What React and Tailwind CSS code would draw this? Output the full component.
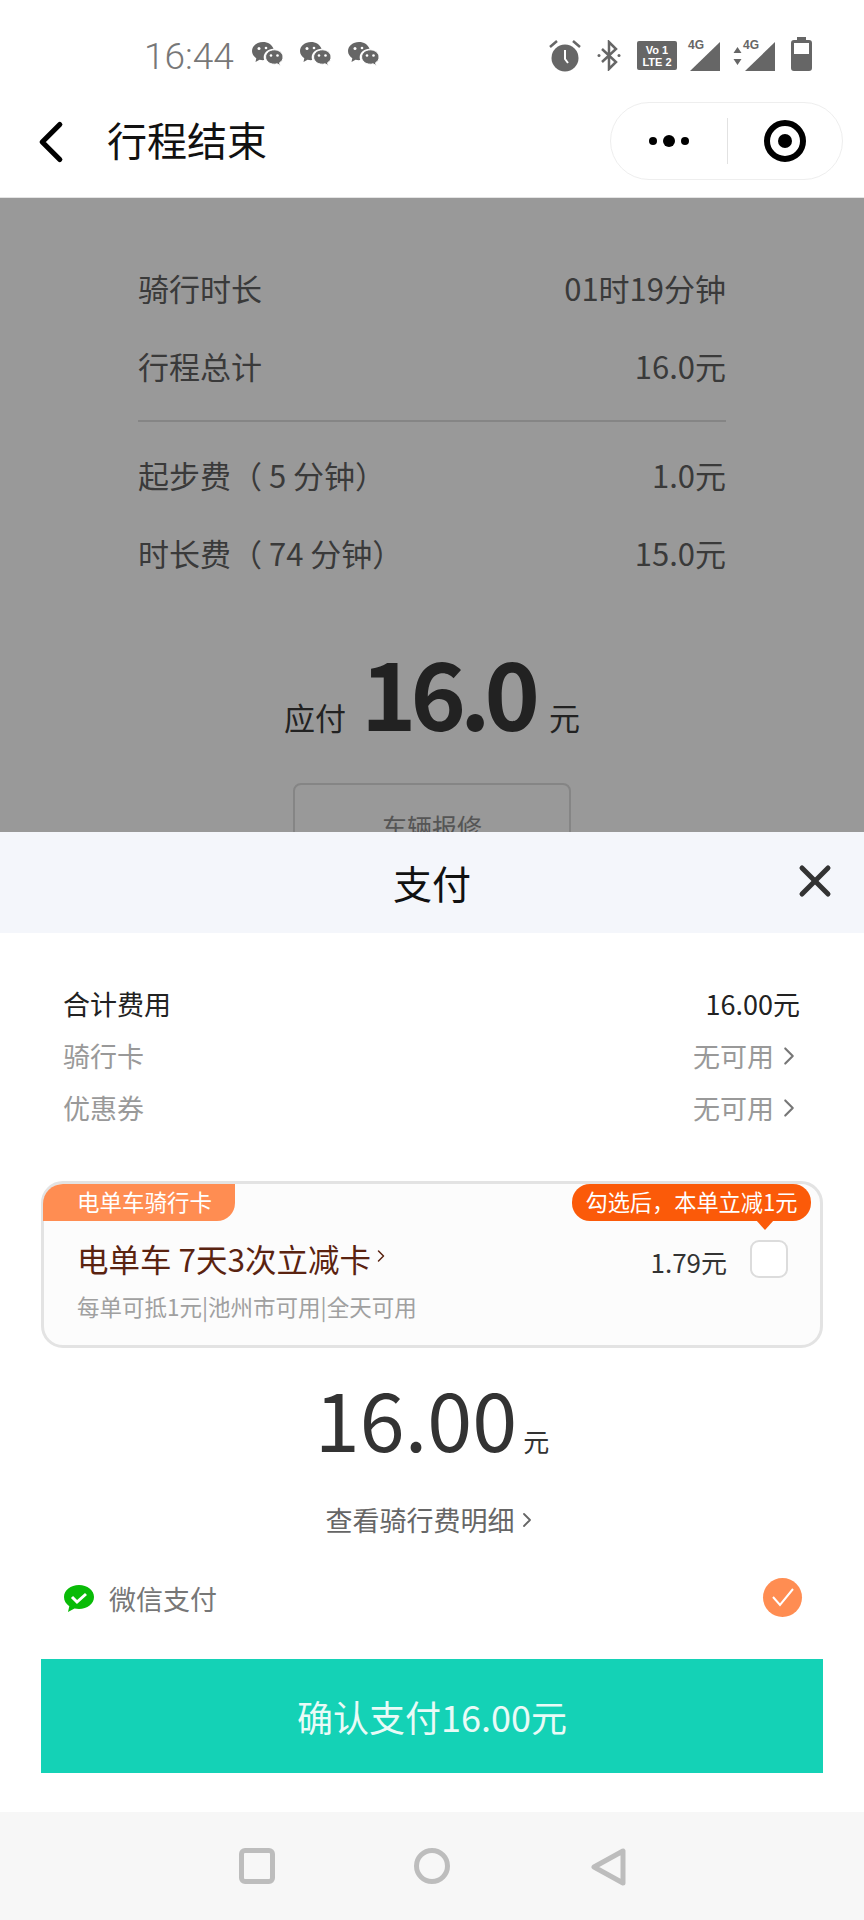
import { ChevronLeft, ChevronRight, X } from 'lucide-react';

const FONT = "font-['Noto_Sans_CJK_SC','Noto_Sans',sans-serif]";

function WeChatGlyph() {
  return (
    <svg width="33" height="30" viewBox="0 0 33 30" fill="#666">
      <path d="M12 1C5.9 1 1 5 1 10c0 3 1.700 5.500 4.300 7.200L4.500 21l4-2.300c1.100.3 2.300.5 3.500.5.400 0 .8 0 1.200-.1-.3-1-.5-1.900-.5-2.900 0-4.800 4.500-8.500 9.800-8.500C21 3.500 16.900 1 12 1z" />
      <path d="M32 16c0-4-3.900-7.200-8.700-7.200S14.600 12 14.600 16s3.900 7.200 8.700 7.200c1 0 1.900-.1 2.800-.4l3.200 1.900-.7-3c2.600-1.400 3.400-3.400 3.400-5.700z" stroke="#fff" strokeWidth="1" />
      <circle cx="8" cy="7.500" r="1.500" fill="#fff" />
      <circle cx="15" cy="7" r="1.300" fill="#fff" />
      <circle cx="20" cy="14.500" r="1.300" fill="#fff" />
      <circle cx="26.500" cy="14.500" r="1.300" fill="#fff" />
    </svg>
  );
}

function SignalIcon() {
  return (
    <div className="relative w-[32px] h-[32px]">
      <svg width="32" height="32" viewBox="0 0 32 32" fill="#666" className="absolute right-0 bottom-0">
        <path d="M32 2v29H2z" />
      </svg>
      <span className="absolute left-[0px] top-[-2px] font-['Liberation_Sans',sans-serif] font-bold text-[12px] leading-[14px] text-[#666]">4G</span>
    </div>
  );
}

function StatusBar() {
  return (
    <div className="h-[95px] flex items-start pt-[33px] pl-[144px] pr-[52px]">
      <span className="font-['Roboto',sans-serif] font-light text-[37px] leading-[47px] text-[#777] w-[107px]">16:44</span>
      <div className="flex gap-[15px] pt-[8px]">
        <WeChatGlyph />
        <WeChatGlyph />
        <WeChatGlyph />
      </div>
      <div className="ml-auto flex items-center h-[47px] -mt-[1px]">
        <svg width="34" height="34" viewBox="0 0 34 34" fill="#666" className="mr-[15px]">
          <circle cx="17" cy="19" r="13.500" />
          <path d="M17 11v9l3 4" stroke="#fff" strokeWidth="2" fill="none" />
          <path d="M2 8l7-6M32 8l-7-6" stroke="#666" strokeWidth="2.500" />
        </svg>
        <svg width="24" height="31" viewBox="0 0 24 31" fill="none" stroke="#666" strokeWidth="2.500" className="mr-[16px]">
          <path d="M5 9l14 13-7 7V2l7 7L5 22" />
          <circle cx="2" cy="15.500" r="1.500" fill="#666" stroke="none" />
          <circle cx="22" cy="15.500" r="1.500" fill="#666" stroke="none" />
        </svg>
        <div className="w-[40px] h-[29px] bg-[#666] rounded-[2px] flex flex-col items-center justify-center mr-[11px] font-['Liberation_Sans',sans-serif] font-bold text-[11px] leading-[12px] text-white">
          <span>Vo 1</span>
          <span>LTE 2</span>
        </div>
        <SignalIcon />
        <svg width="9" height="20" viewBox="0 0 9 20" fill="#666" className="ml-[13px] mr-[1px]">
          <path d="M4.500 1L8.500 7H.5zM4.500 19L.5 13h8z" />
        </svg>
        <SignalIcon />
        <div className="ml-[16px] relative w-[21px] h-[31px] border-[3px] border-[#666] rounded-[3px] flex flex-col justify-end">
          <div className="absolute top-[-6px] left-[3px] w-[9px] h-[3px] bg-[#666]" />
          <div className="h-[14px] bg-[#666]" />
        </div>
      </div>
    </div>
  );
}

function NavBar() {
  return (
    <div className="h-[103px] bg-white flex items-start border-b border-[#e4e4e4]">
      <ChevronLeft size={70} strokeWidth={1.800} className="text-black ml-[16px] mt-[12px] shrink-0" />
      <span className="ml-[21px] mt-[16px] text-[40px] leading-[56px] text-[#111]">行程结束</span>
      <div className="ml-auto mr-[21px] w-[233px] h-[78px] mt-[7px] rounded-full border border-[#eeeeee] flex items-center">
        <div className="w-[116px] flex items-center justify-center gap-[6px]">
          <span className="w-[8px] h-[8px] rounded-full bg-black" />
          <span className="w-[12px] h-[12px] rounded-full bg-black" />
          <span className="w-[8px] h-[8px] rounded-full bg-black" />
        </div>
        <div className="w-px h-[46px] bg-[#e2e2e2]" />
        <div className="flex-1 flex items-center justify-center">
          <div className="w-[42px] h-[42px] rounded-full border-[6px] border-black flex items-center justify-center">
            <span className="w-[14px] h-[14px] rounded-full bg-black" />
          </div>
        </div>
      </div>
    </div>
  );
}

function FeeRow({ label, value }) {
  return (
    <div className="flex justify-between h-[78px] items-center text-[31px] text-[#3a3a3a]">
      <span>{label}</span>
      <span>{value}</span>
    </div>
  );
}

function TripSummary() {
  return (
    <div className="h-[634px] bg-[#999999] overflow-hidden px-[138px] pt-[51px]">
      <FeeRow label="骑行时长" value="01时19分钟" />
      <FeeRow label="行程总计" value="16.0元" />
      <div className="h-[2px] bg-[#858585] mt-[15px] mb-[14px]" />
      <FeeRow label="起步费（ 5 分钟）" value="1.0元" />
      <FeeRow label="时长费（ 74 分钟）" value="15.0元" />
      <div className="flex items-baseline justify-center mt-[40px] text-[#222] h-[116px]">
        <span className="text-[31px] -translate-y-[1px]">应付</span>
        <span className="text-[94px] leading-[116px] font-bold tracking-[-6px] ml-[15px] mr-[15px]">16.0</span>
        <span className="text-[31px] -translate-y-[1px]">元</span>
      </div>
      <div className="mt-[35px] ml-[155px] w-[278px] h-[80px] rounded-[8px] border-2 border-[#858585] flex justify-center pt-[23px] text-[25px] text-[#555]">
        车辆报修
      </div>
    </div>
  );
}

function PayRow({ label, value, dark }) {
  return (
    <div className={`flex items-center justify-between h-[52px] text-[27px] ${dark ? 'text-[#222]' : 'text-[#999]'}`}>
      <span>{label}</span>
      <span className="flex items-center">
        {value}
        {!dark && <ChevronRight size={30} strokeWidth={1.700} className="text-[#777] -mr-[4px]" />}
      </span>
    </div>
  );
}

function RideCard() {
  return (
    <div className="relative mx-[41px] mt-[47px] h-[167px] rounded-[22px] border-[3px] border-[#e3e3e3] bg-[#fcfcfc]">
      <div className="absolute left-[-1px] top-0 w-[192px] h-[37px] bg-[#ff8d52] rounded-tl-[20px] rounded-br-[18px] text-white text-[22.500px] leading-[35px] pl-[34px]">
        电单车骑行卡
      </div>
      <div className="absolute right-[9px] top-0 w-[239px] h-[37px] bg-[#fb5a09] rounded-[18px] text-white text-[22.200px] leading-[35px] text-center whitespace-nowrap">
        勾选后，本单立减1元
        <div className="absolute right-[37px] top-[36px] w-0 h-0 border-l-[9px] border-r-[9px] border-t-[10px] border-l-transparent border-r-transparent border-t-[#fb5a09]" />
      </div>
      <div className="absolute left-[33px] top-[50px] flex items-center text-[31.500px] leading-[48px] text-[#5a2310]">
        电单车 7天3次立减卡
        <ChevronRight size={20} strokeWidth={1.800} className="text-[#5a2310] -mt-[4px]" />
      </div>
      <div className="absolute left-[33px] top-[105px] text-[22.500px] leading-[34px] text-[#a0a0a0]">每单可抵1元|池州市可用|全天可用</div>
      <div className="absolute right-[93px] top-[60px] text-[26px] leading-[36px] text-[#333]">1.79元</div>
      <div className="absolute right-[32px] top-[56px] w-[38px] h-[38px] rounded-[9px] border-2 border-[#dcdcdc] bg-white" />
    </div>
  );
}

function PaymentSheet() {
  return (
    <div className="flex-1 bg-white">
      <div className="relative h-[101px] bg-[#f4f6fb] flex items-center justify-center text-[39px] text-[#111]">
        支付
        <X size={52} strokeWidth={2.300} className="absolute right-[23px] top-[23px] text-[#333]" />
      </div>
      <div className="pl-[63px] pr-[64px] pt-[45px]">
        <PayRow label="合计费用" value="16.00元" dark />
        <PayRow label="骑行卡" value="无可用" />
        <PayRow label="优惠券" value="无可用" />
      </div>
      <RideCard />
      <div className="flex items-baseline justify-center h-[116px] mt-[11px] text-[#333]">
        <span className="text-[81px] leading-[116px]">16.00</span>
        <span className="text-[26px] ml-[6px]">元</span>
      </div>
      <div className="flex items-center justify-center h-[40px] mt-[25px] text-[27px] text-[#666]">
        查看骑行费明细
        <ChevronRight size={24} strokeWidth={1.800} className="text-[#666]" />
      </div>
      <div className="flex items-center h-[60px] mt-[29px] pl-[63px] pr-[62px]">
        <svg width="32" height="30" viewBox="0 0 32 30">
          <path d="M16 1C7.700 1 1 6.300 1 13c0 3.700 2 7 5.300 9.200L5 28l6.500-3.500c1.400.3 2.900.5 4.500.5 8.300 0 15-5.300 15-12S24.300 1 16 1z" fill="#09bb07" />
          <path d="M9 13l5 5 9-8" fill="none" stroke="#fff" strokeWidth="3" />
        </svg>
        <span className="ml-[14px] text-[27px] text-[#777]">微信支付</span>
        <div className="ml-auto -mt-[4px] w-[39px] h-[39px] rounded-full bg-[#ff8d52] flex items-center justify-center">
          <svg width="24" height="20" viewBox="0 0 24 20" fill="none" stroke="#fff" strokeWidth="2">
            <path d="M2 10l7 8L22 2" />
          </svg>
        </div>
      </div>
      <div className="mx-[41px] mt-[30px] h-[114px] bg-[#14d2b6] flex items-center justify-center text-[36px] text-[#e9fbf7]">
        确认支付16.00元
      </div>
    </div>
  );
}

function SystemNav() {
  return (
    <div className="h-[108px] bg-[#f7f7f7] flex items-start pt-[36px] pl-[239px]">
      <div className="w-[36px] h-[36px] rounded-[6px] border-[5px] border-[#bdbdbd]" />
      <div className="w-[36px] h-[36px] rounded-full border-[5px] border-[#bdbdbd] ml-[139px]" />
      <svg width="36" height="38" viewBox="0 0 36 38" fill="none" stroke="#bdbdbd" strokeWidth="5" strokeLinejoin="round" className="ml-[141px]">
        <path d="M32 3v32L3 19z" />
      </svg>
    </div>
  );
}

export default function App() {
  return (
    <div className={`w-[864px] h-[1920px] overflow-hidden bg-white flex flex-col ${FONT}`}>
      <StatusBar />
      <NavBar />
      <TripSummary />
      <PaymentSheet />
      <SystemNav />
    </div>
  );
}
